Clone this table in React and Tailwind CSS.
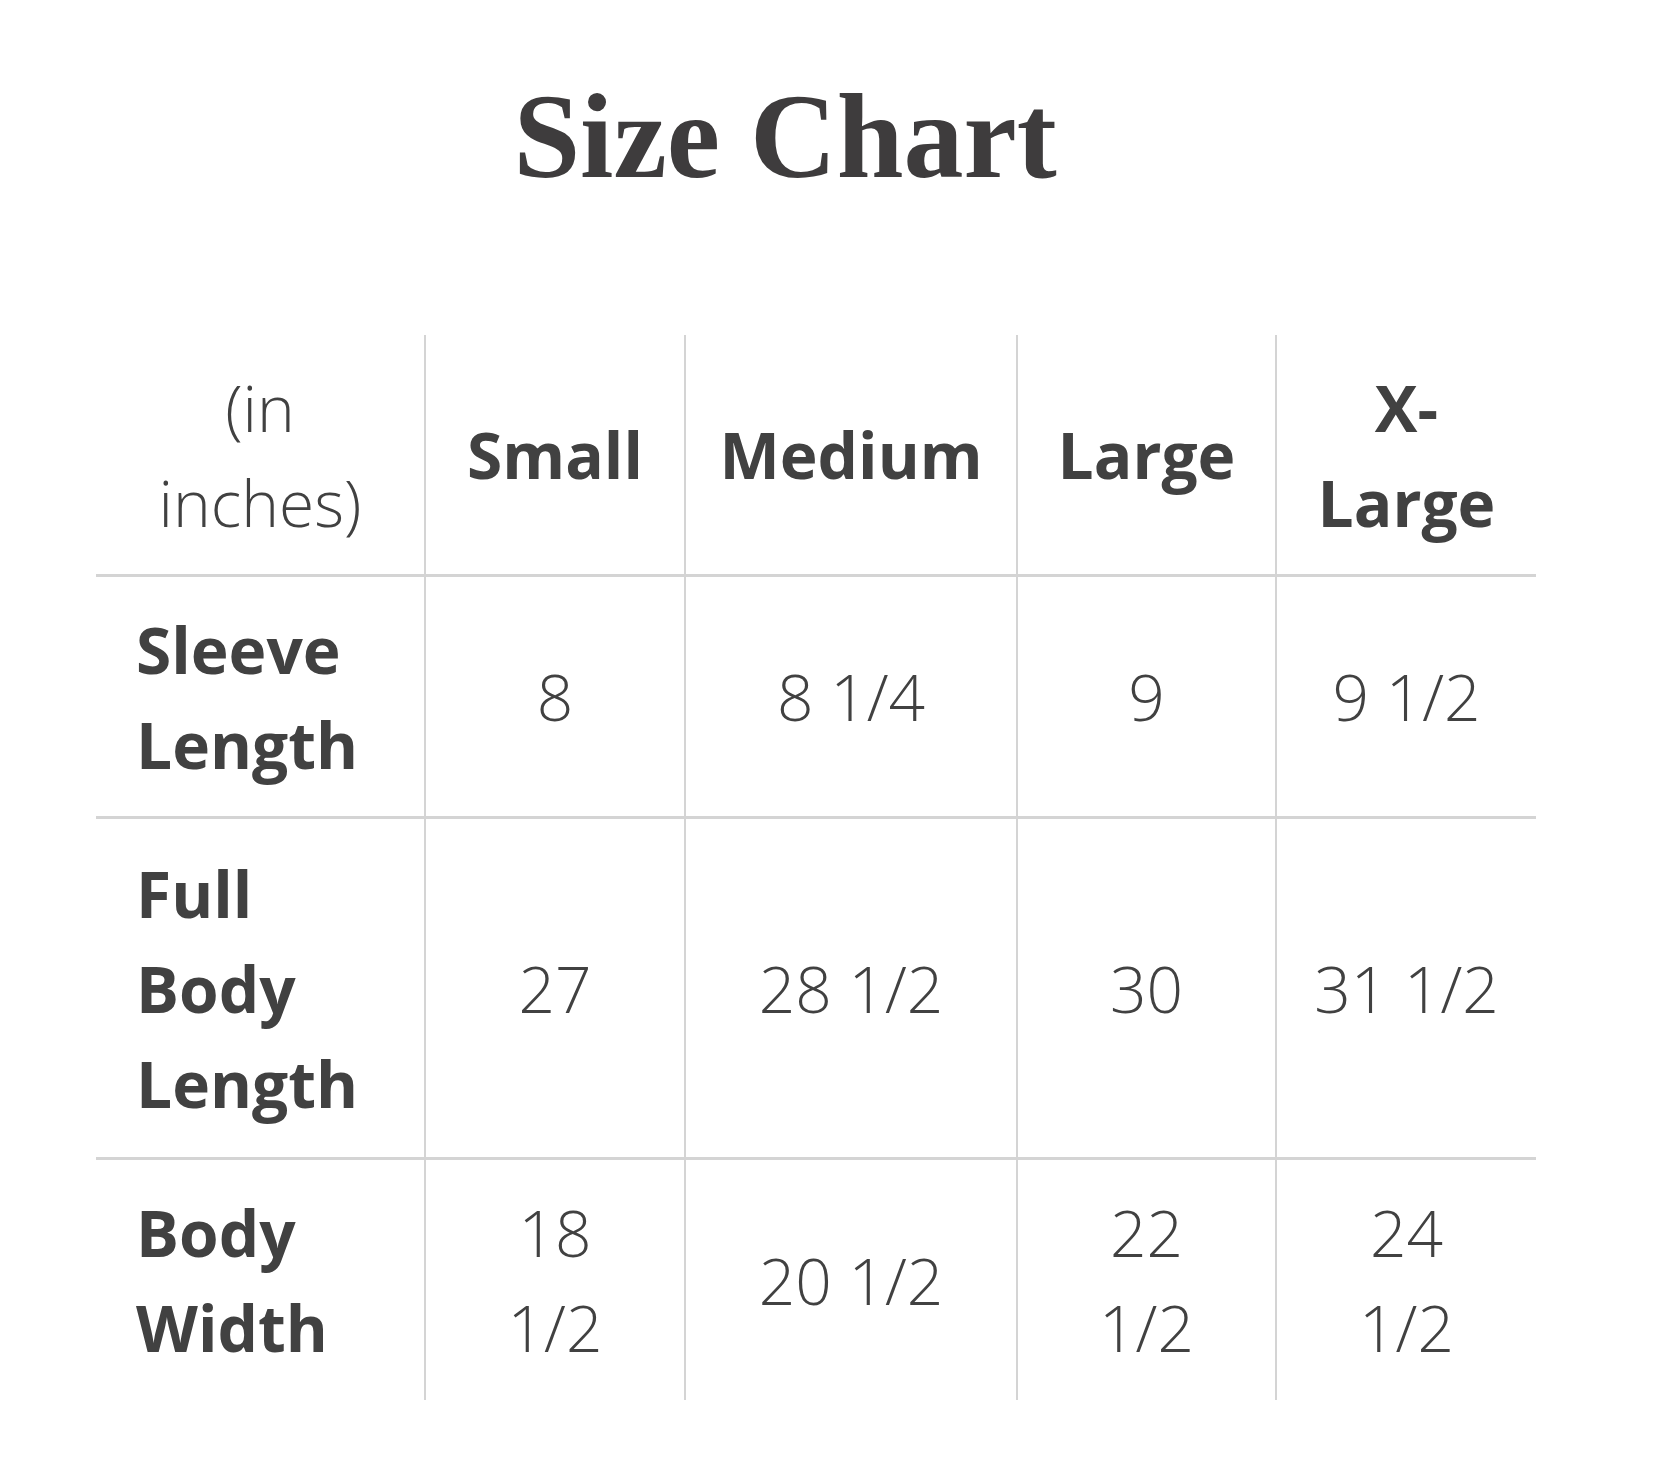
export default function App() {
  const cols = ["Small", "Medium", "Large", ["X-", "Large"]];
  const rows = [
    { label: ["Sleeve", "Length"], vals: [["8"], ["8 1/4"], ["9"], ["9 1/2"]] },
    { label: ["Full", "Body", "Length"], vals: [["27"], ["28 1/2"], ["30"], ["31 1/2"]] },
    { label: ["Body", "Width"], vals: [["18", "1/2"], ["20 1/2"], ["22", "1/2"], ["24", "1/2"]] },
  ];
  const cellBase = "flex flex-col justify-center border-[#d4d4d4]";
  const lines = (arr) =>
    (Array.isArray(arr) ? arr : [arr]).map((t, i) => (
      <span key={i} className="whitespace-nowrap">{t}</span>
    ));
  return (
    <div
      className="w-[1662px] h-[1472px] bg-white text-[#414141]"
      style={{ fontFamily: '"Open Sans", "Liberation Sans", sans-serif' }}
    >
      <div className="pt-[62px] pr-[92px] text-center">
        <h1
          className="text-[120px] leading-[150px] font-bold text-[#3e3c3d]"
          style={{ fontFamily: '"Liberation Serif", "DejaVu Serif", serif' }}
        >
          Size Chart
        </h1>
      </div>
      <div className="pl-[96px] pt-[123px]">
        <div className="grid w-[1440px] grid-cols-[330px_260px_332px_259px_259px] grid-rows-[242px_242px_341px_240px] text-[64px] leading-[95px]">
          <div className={`${cellBase} items-center border-r-2 border-b-[3px] font-light`}>
            {lines(["(in", "inches)"])}
          </div>
          {cols.map((c, i) => (
            <div
              key={i}
              className={`${cellBase} items-center border-b-[3px] font-bold ${i < 3 ? "border-r-2" : ""}`}
            >
              {lines(c)}
            </div>
          ))}
          {rows.map((r, ri) => {
            const last = ri === rows.length - 1;
            return [
              <div
                key={`l${ri}`}
                className={`${cellBase} items-start pl-[40px] border-r-2 font-bold ${last ? "" : "border-b-[3px]"}`}
              >
                {lines(r.label)}
              </div>,
              ...r.vals.map((v, vi) => (
                <div
                  key={`v${ri}-${vi}`}
                  className={`${cellBase} items-center font-light ${vi < 3 ? "border-r-2" : ""} ${last ? "" : "border-b-[3px]"}`}
                >
                  {lines(v)}
                </div>
              )),
            ];
          })}
        </div>
      </div>
    </div>
  );
}
